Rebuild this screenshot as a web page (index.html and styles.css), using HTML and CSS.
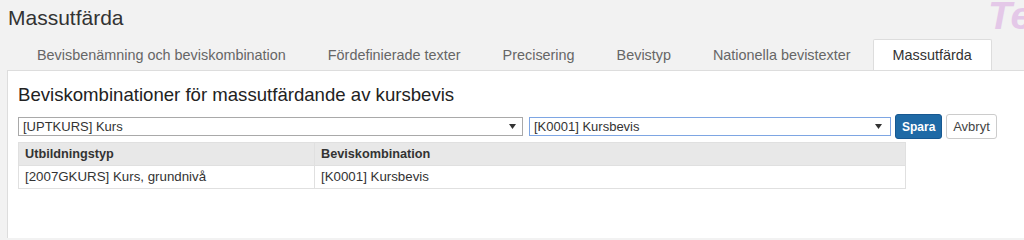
FILE: index.html
```html
<!DOCTYPE html>
<html lang="sv">
<head>
<meta charset="utf-8">
<title>Massutfärda</title>
<link rel="stylesheet" href="styles.css">
</head>
<body>
<div class="watermark">Te</div>
<h1 class="page-title">Massutfärda</h1>
<ul class="tabs">
  <li class="tab">Bevisbenämning och beviskombination</li>
  <li class="tab">Fördefinierade texter</li>
  <li class="tab">Precisering</li>
  <li class="tab">Bevistyp</li>
  <li class="tab">Nationella bevistexter</li>
  <li class="tab active">Massutfärda</li>
</ul>
<div class="panel">
  <h2 class="panel-title">Beviskombinationer för massutfärdande av kursbevis</h2>
  <div class="form-row">
    <div class="select select-type"><span class="select-text">[UPTKURS] Kurs</span><svg class="arrow" width="7" height="5" viewBox="0 0 7 5"><path d="M0 0H7L3.5 5Z" fill="#333"/></svg></div>
    <div class="select select-comb focused"><span class="select-text">[K0001] Kursbevis</span><svg class="arrow" width="7" height="5" viewBox="0 0 7 5"><path d="M0 0H7L3.5 5Z" fill="#333"/></svg></div>
    <button class="btn btn-primary">Spara</button>
    <button class="btn btn-default">Avbryt</button>
  </div>
  <table class="grid">
    <thead>
      <tr><th class="col-type">Utbildningstyp</th><th>Beviskombination</th></tr>
    </thead>
    <tbody>
      <tr><td>[2007GKURS] Kurs, grundnivå</td><td>[K0001] Kursbevis</td></tr>
    </tbody>
  </table>
</div>
</body>
</html>
```
FILE: styles.css
```css
html, body {
  margin: 0;
  padding: 0;
  overflow: hidden;
}
body {
  background: #f2f2f2;
  font-family: "Liberation Sans", Arial, sans-serif;
  color: #333;
  height: 238px;
  position: relative;
}
.watermark {
  position: absolute;
  left: 988px;
  top: -6px;
  font-size: 39px;
  font-weight: bold;
  font-style: italic;
  color: #e4c8e8;
  line-height: 44px;
  white-space: nowrap;
}
.page-title {
  margin: 0;
  padding: 6px 0 0 8px;
  font-size: 21px;
  line-height: 24px;
  font-weight: normal;
  color: #333;
}
.tabs {
  list-style: none;
  margin: 9px 0 0 0;
  padding: 0 0 0 17px;
  display: flex;
  position: relative;
  z-index: 1;
}
.tab {
  padding: 5px 19px;
  margin-right: 2px;
  font-size: 14.4px;
  line-height: 20px;
  color: #666;
  border: 1px solid transparent;
  border-bottom: none;
  white-space: nowrap;
}
.tab.active {
  background: #fff;
  color: #333;
  border-color: #ddd;
  border-radius: 2px 2px 0 0;
}
.panel {
  margin-left: 7px;
  background: #fff;
  border-top: 1px solid #ddd;
  border-left: 1px solid #ddd;
  padding: 13px 10px 0 10px;
  height: 200px;
}
.panel-title {
  margin: 0;
  font-size: 18.6px;
  line-height: 22px;
  font-weight: normal;
  color: #222;
}
.form-row {
  display: flex;
  align-items: center;
  margin-top: 8px;
  height: 25px;
}
.select {
  box-sizing: border-box;
  height: 19px;
  border: 1px solid #a9a9a9;
  display: flex;
  align-items: center;
  justify-content: space-between;
  padding: 0 6px 0 4px;
  font-size: 13px;
  color: #333;
  background: #fff;
}
.select-type {
  width: 505px;
  margin-right: 6px;
}
.select-comb {
  width: 362px;
  margin-right: 4px;
  padding-right: 8px;
}
.select.focused {
  border-color: #7ea6e3;
}
.select-text {
  line-height: 17px;
  white-space: nowrap;
}
.arrow {
  display: block;
}
.btn {
  box-sizing: border-box;
  height: 25px;
  font-family: "Liberation Sans", Arial, sans-serif;
  border-radius: 3px;
  border: 1px solid;
  padding: 0 6px;
  margin: 0;
}
.btn-primary {
  width: 47px;
  background: #1f6aa6;
  border-color: #175891;
  color: #fff;
  font-size: 12px;
  font-weight: bold;
  margin-right: 4px;
}
.btn-default {
  width: 51px;
  background: #fff;
  border-color: #ccc;
  color: #444;
  font-size: 13px;
}
.grid {
  border-collapse: collapse;
  margin-top: 3px;
  width: 888px;
  font-size: 13px;
}
.grid th, .grid td {
  border: 1px solid #e0e0e0;
  padding: 4px 6px;
  line-height: 14px;
  text-align: left;
  color: #333;
}
.grid th {
  background: #e8e8e8;
  font-weight: bold;
  font-size: 12.7px;
}
.grid td {
  font-size: 13.3px;
}
.col-type {
  width: 283px;
}
```
